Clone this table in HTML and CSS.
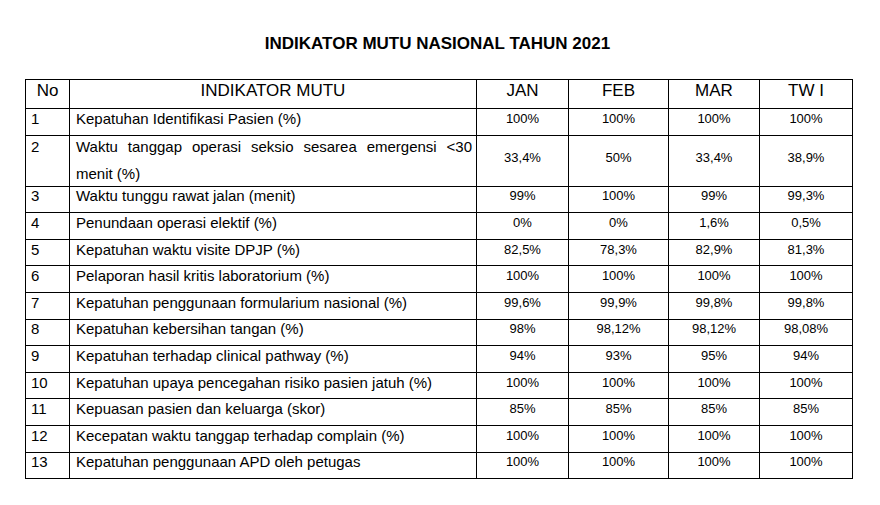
FILE: index.html
```html
<!DOCTYPE html>
<html lang="id">
<head>
<meta charset="utf-8">
<title>Indikator Mutu Nasional Tahun 2021</title>
<link rel="stylesheet" href="styles.css">
</head>
<body>
<div class="page">
  <h1 class="title">INDIKATOR MUTU NASIONAL TAHUN 2021</h1>
  <table class="imn">
    <colgroup>
      <col class="c-no"><col class="c-ind"><col class="c-jan"><col class="c-feb"><col class="c-mar"><col class="c-tw">
    </colgroup>
    <thead>
      <tr class="head">
        <th>No</th><th>INDIKATOR MUTU</th><th>JAN</th><th>FEB</th><th>MAR</th><th>TW I</th>
      </tr>
    </thead>
    <tbody>
      <tr><td class="no">1</td><td class="ind">Kepatuhan Identifikasi Pasien (%)</td><td class="v">100%</td><td class="v">100%</td><td class="v">100%</td><td class="v">100%</td></tr>
      <tr class="tall"><td class="no top">2</td><td class="ind top"><div class="wrap2">Waktu tanggap operasi seksio sesarea emergensi &lt;30 menit (%)</div></td><td class="v">33,4%</td><td class="v">50%</td><td class="v">33,4%</td><td class="v">38,9%</td></tr>
      <tr><td class="no">3</td><td class="ind">Waktu tunggu rawat jalan (menit)</td><td class="v">99%</td><td class="v">100%</td><td class="v">99%</td><td class="v">99,3%</td></tr>
      <tr><td class="no">4</td><td class="ind">Penundaan operasi elektif (%)</td><td class="v">0%</td><td class="v">0%</td><td class="v">1,6%</td><td class="v">0,5%</td></tr>
      <tr><td class="no">5</td><td class="ind">Kepatuhan waktu visite DPJP (%)</td><td class="v">82,5%</td><td class="v">78,3%</td><td class="v">82,9%</td><td class="v">81,3%</td></tr>
      <tr><td class="no">6</td><td class="ind">Pelaporan hasil kritis laboratorium (%)</td><td class="v">100%</td><td class="v">100%</td><td class="v">100%</td><td class="v">100%</td></tr>
      <tr><td class="no">7</td><td class="ind">Kepatuhan penggunaan formularium nasional (%)</td><td class="v">99,6%</td><td class="v">99,9%</td><td class="v">99,8%</td><td class="v">99,8%</td></tr>
      <tr><td class="no">8</td><td class="ind">Kepatuhan kebersihan tangan (%)</td><td class="v">98%</td><td class="v">98,12%</td><td class="v">98,12%</td><td class="v">98,08%</td></tr>
      <tr><td class="no">9</td><td class="ind">Kepatuhan terhadap clinical pathway (%)</td><td class="v">94%</td><td class="v">93%</td><td class="v">95%</td><td class="v">94%</td></tr>
      <tr><td class="no">10</td><td class="ind">Kepatuhan upaya pencegahan risiko pasien jatuh (%)</td><td class="v">100%</td><td class="v">100%</td><td class="v">100%</td><td class="v">100%</td></tr>
      <tr><td class="no">11</td><td class="ind">Kepuasan pasien dan keluarga (skor)</td><td class="v">85%</td><td class="v">85%</td><td class="v">85%</td><td class="v">85%</td></tr>
      <tr><td class="no">12</td><td class="ind">Kecepatan waktu tanggap terhadap complain (%)</td><td class="v">100%</td><td class="v">100%</td><td class="v">100%</td><td class="v">100%</td></tr>
      <tr><td class="no">13</td><td class="ind">Kepatuhan penggunaan APD oleh petugas</td><td class="v">100%</td><td class="v">100%</td><td class="v">100%</td><td class="v">100%</td></tr>
    </tbody>
  </table>
</div>
</body>
</html>
```
FILE: styles.css
```css
html, body {
  margin: 0;
  padding: 0;
  background: #ffffff;
}
body {
  font-family: "Liberation Sans", Arial, sans-serif;
  color: #000000;
}
.page {
  width: 828px;
  margin-left: 25px;
  padding-top: 34px;
}
.title {
  margin: 0 3px 25px 0;
  font-size: 17px;
  line-height: 20px;
  font-weight: bold;
  text-align: center;
}
.imn {
  border-collapse: collapse;
  table-layout: fixed;
  width: 828px;
}
.c-no { width: 44px; }
.c-ind { width: 407px; }
.c-jan { width: 92px; }
.c-feb { width: 100px; }
.c-mar { width: 91px; }
.c-tw { width: 93px; }

.imn th, .imn td {
  border: 1px solid #000000;
  padding: 0 0 6px 0;
  vertical-align: middle;
}
.imn thead tr {
  height: 29px;
}
.head th {
  font-size: 17px;
  line-height: 20px;
  font-weight: normal;
  text-align: center;
}
.imn tbody tr {
  height: 26.6px;
}
.imn tbody tr.tall {
  height: 51px;
}
.no {
  font-size: 15px;
  line-height: 18px;
  padding-left: 5px !important;
  text-align: left;
}
.ind {
  font-size: 15px;
  line-height: 18px;
  padding-left: 6px !important;
  padding-right: 4px !important;
  text-align: left;
  white-space: nowrap;
}
.v {
  font-size: 13px;
  line-height: 18px;
  text-align: center;
}
.imn td.top {
  vertical-align: top;
  padding-top: 2px;
  padding-bottom: 0;
}
.wrap2 {
  white-space: normal;
  text-align: justify;
  line-height: 27.5px;
  margin: -5px 0 -5px 0;
}
```
